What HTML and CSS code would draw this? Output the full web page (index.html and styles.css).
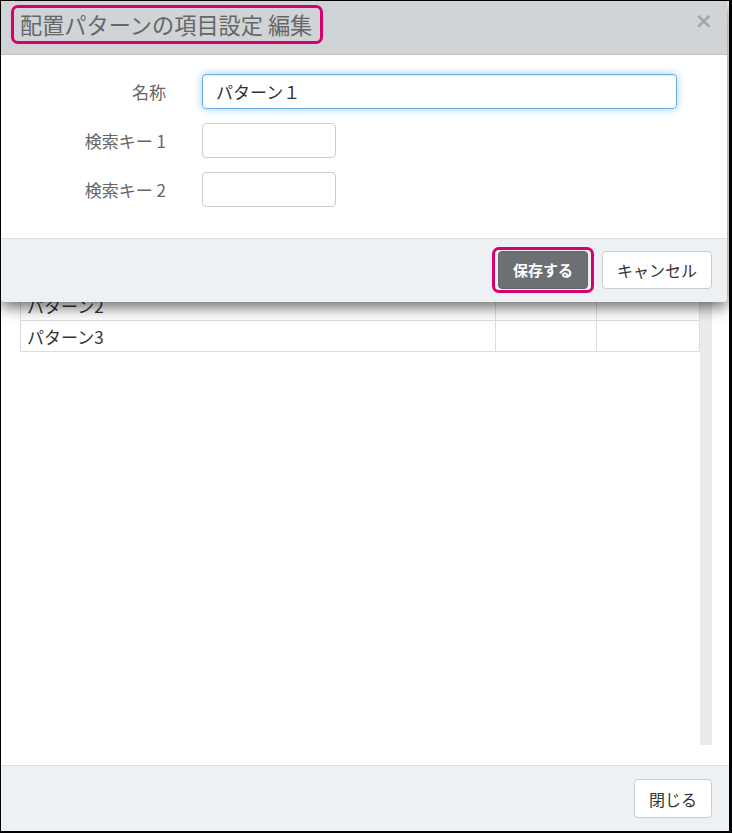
FILE: index.html
```html
<!DOCTYPE html>
<html lang="ja">
<head>
    <meta charset="UTF-8">
    <title>配置パターンの項目設定 編集</title>
    <link rel="stylesheet" href="styles.css">
</head>
<body>
<div class="frame">

    <div class="outer-dialog">
        <div class="outer-body">
            <div class="list-wrap">
                <table class="pattern-table">
                    <tr class="head"><th>名称</th><th></th><th></th></tr>
                    <tr><td>パターン１</td><td></td><td></td></tr>
                    <tr><td>パターン2</td><td></td><td></td></tr>
                    <tr><td>パターン3</td><td></td><td></td></tr>
                </table>
                <div class="scroll-track"></div>
            </div>
        </div>
        <div class="outer-footer">
            <button class="btn btn-default" type="button">閉じる</button>
        </div>
    </div>

    <div class="modal">
        <div class="modal-header">
            <span class="mark title-mark"><span class="modal-title">配置パターンの項目設定 編集</span></span>
            <button class="close" type="button">&times;</button>
        </div>
        <form class="modal-body">
            <label class="form-label" for="name">名称</label>
            <input class="form-input focused" id="name" type="text" value="パターン１">
            <label class="form-label" for="key1">検索キー 1</label>
            <input class="form-input short" id="key1" type="text">
            <label class="form-label" for="key2">検索キー 2</label>
            <input class="form-input short" id="key2" type="text">
        </form>
        <div class="modal-footer">
            <span class="mark btn-mark"><button class="btn btn-save" type="button">保存する</button></span>
            <button class="btn btn-default" type="button">キャンセル</button>
        </div>
    </div>

</div>
</body>
</html>
```

FILE: styles.css
```css
* {
    box-sizing: border-box;
}

html, body {
    margin: 0;
    padding: 0;
    background: #000;
}

body {
    font-family: "Noto Sans CJK JP", "Noto Sans", sans-serif;
    color: #333;
}

.frame {
    position: relative;
    width: 732px;
    height: 833px;
    border-style: solid;
    border-color: #000;
    border-width: 1px 3px 2px 1px;
    background: #fff;
}

/* dialog underneath */

.outer-dialog {
    display: flex;
    flex-direction: column;
    height: 100%;
    background: #fff;
}

.outer-body {
    flex: 1;
    padding: 226px 17px 20px 19px;
}

.list-wrap {
    display: flex;
    height: 100%;
}

.pattern-table {
    flex: 1;
    align-self: flex-start;
    border-collapse: collapse;
    font-size: 17px;
}

.pattern-table th,
.pattern-table td {
    height: 31px;
    padding: 0 6px;
    border: 1px solid #ddd;
    text-align: left;
    font-weight: normal;
    line-height: 1;
}

.pattern-table td:first-child {
    width: 475px;
}

.pattern-table td:nth-child(2) {
    width: 101px;
}

.scroll-track {
    width: 12px;
    background: #ebebeb;
}

.outer-footer {
    display: flex;
    justify-content: flex-end;
    align-items: center;
    height: 66px;
    padding: 0 17px 0 0;
    border-top: 1px solid #dcdfe2;
    background: #eef1f4;
}

.outer-footer .btn {
    width: 78px;
    height: 39px;
}

/* buttons */

.btn {
    font-family: inherit;
    font-size: 16px;
    height: 38px;
    padding: 0 14px;
    border-radius: 4px;
    cursor: pointer;
}

.btn-default {
    background: #fff;
    color: #333;
    border: 1px solid #ccc;
}

.btn-save {
    width: 90px;
    background: #6c7073;
    color: #fff;
    font-weight: bold;
    font-size: 15px;
    border: 1px solid #63676a;
}

/* pink highlight marks */

.mark {
    display: inline-flex;
    align-items: center;
    border: 3px solid #d6006e;
    border-radius: 7px;
}

/* the modal on top */

.modal {
    position: absolute;
    top: 0;
    left: 0;
    right: 2px;
    background: #fff;
    border-radius: 0 0 4px 4px;
    box-shadow: 0 5px 15px rgba(0, 0, 0, 0.6);
}

.modal-header {
    display: flex;
    justify-content: space-between;
    align-items: flex-start;
    height: 54px;
    padding: 4px 14px 0 10px;
    background: #d1d4d7;
    border-bottom: 1px solid #bfc2c5;
}

.title-mark {
    height: 39px;
    padding: 0 8px 0 6px;
}

.modal-title {
    font-size: 22.2px;
    color: #666;
    line-height: 1;
    white-space: nowrap;
}

.close {
    margin-top: 5px;
    padding: 0;
    border: 0;
    background: none;
    font-family: "DejaVu Sans", sans-serif;
    font-size: 22px;
    font-weight: bold;
    line-height: 1;
    color: #a3a6a9;
    cursor: pointer;
}

.modal-body {
    display: grid;
    grid-template-columns: 165px 1fr;
    column-gap: 36px;
    row-gap: 14px;
    align-items: center;
    margin: 0;
    padding: 19px 50px 31px 0;
}

.form-label {
    text-align: right;
    font-size: 17px;
    color: #666;
}

.form-input {
    height: 35px;
    padding: 0 13px;
    font-family: inherit;
    font-size: 17px;
    color: #333;
    border: 1px solid #ccc;
    border-radius: 4px;
    outline: none;
}

.form-input.focused {
    border-color: #66afe9;
    box-shadow: inset 0 1px 1px rgba(0,0,0,.075), 0 0 8px rgba(102, 175, 233, 0.6);
}

.form-input.short {
    width: 134px;
}

.modal-footer {
    display: flex;
    justify-content: flex-end;
    align-items: center;
    gap: 8px;
    height: 64px;
    padding: 0 15px 2px 0;
    background: #eef1f4;
    border-top: 1px solid #dcdfe2;
    border-radius: 0 0 4px 4px;
}

.btn-mark {
    padding: 1px 3px;
}

.modal-footer .btn-default {
    width: 110px;
}
```
